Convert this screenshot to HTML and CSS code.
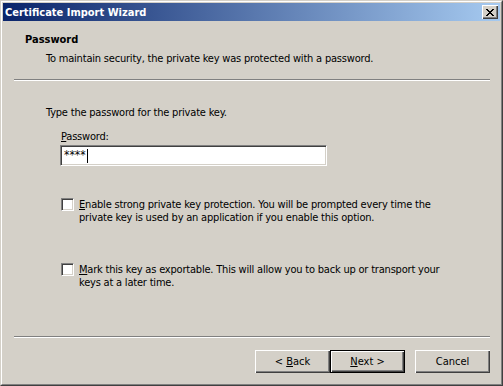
FILE: index.html
```html
<!DOCTYPE html>
<html lang="en">
<head>
  <meta charset="UTF-8">
  <title>Certificate Import Wizard</title>
  <link rel="stylesheet" href="styles.css">
</head>
<body>
  <div class="window">
    <div class="frame">
      <div class="titlebar">
        <span class="title">Certificate Import Wizard</span>
        <button class="close-btn" aria-label="Close">
          <svg width="8" height="7" viewBox="0 0 8 7" shape-rendering="crispEdges">
            <path d="M0 0h2v1h-2zM6 0h2v1h-2zM1 1h2v1h-2zM5 1h2v1h-2zM2 2h4v1h-4zM3 3h2v1h-2zM2 4h4v1h-4zM1 5h2v1h-2zM5 5h2v1h-2zM0 6h2v1h-2zM6 6h2v1h-2z" fill="#000"/>
          </svg>
        </button>
      </div>

      <div class="header">
        <h1>Password</h1>
        <p class="subtitle">To maintain security, the private key was protected with a password.</p>
      </div>

      <div class="separator"></div>

      <div class="content">
        <p class="intro">Type the password for the private key.</p>
        <label class="field-label" for="pwd"><u>P</u>assword:</label>
        <div class="edit" id="pwd">****<span class="caret"></span></div>

        <div class="check-row first">
          <span class="checkbox"></span>
          <span class="check-text"><u>E</u>nable strong private key protection. You will be prompted every time the<br>private key is used by an application if you enable this option.</span>
        </div>

        <div class="check-row second">
          <span class="checkbox"></span>
          <span class="check-text"><u>M</u>ark this key as exportable. This will allow you to back up or transport your<br>keys at a later time.</span>
        </div>
      </div>

      <div class="separator bottom"></div>

      <div class="buttons">
        <button class="btn">&lt; <u>B</u>ack</button>
        <button class="btn default"><u>N</u>ext &gt;</button>
        <button class="btn cancel">Cancel</button>
      </div>
    </div>
  </div>
</body>
</html>
```

FILE: styles.css
```css
body {
  margin: 0;
  background: #d4d0c8;
  font-family: "DejaVu Sans Condensed", "DejaVu Sans", sans-serif;
  font-size: 11px;
  line-height: 13px;
  letter-spacing: -0.2px;
  color: #000;
}

.window {
  width: 503px;
  height: 386px;
  box-sizing: border-box;
  border: 1px solid;
  border-color: #d4d0c8 #404040 #404040 #d4d0c8;
  background: #d4d0c8;
}

.frame {
  height: 100%;
  box-sizing: border-box;
  border: 1px solid;
  border-color: #fff #808080 #808080 #fff;
  padding: 1px;
  display: flex;
  flex-direction: column;
}

.titlebar {
  height: 18px;
  flex: 0 0 18px;
  display: flex;
  align-items: center;
  justify-content: space-between;
  padding: 0 2px;
  background: linear-gradient(to right, #0a246a, #a6caf0);
}

.title {
  color: #fff;
  font-weight: bold;
  letter-spacing: 0;
}

.close-btn {
  width: 16px;
  height: 14px;
  padding: 0;
  border: none;
  background: #d4d0c8;
  box-shadow: inset 1px 1px #fff, inset -1px -1px #404040, inset -2px -2px #808080;
  display: flex;
  align-items: center;
  justify-content: center;
}

.header {
  padding-top: 12px;
}

.header h1 {
  margin: 0;
  padding-left: 22px;
  font-size: 11px;
  font-weight: bold;
  letter-spacing: 0;
}

.subtitle {
  margin: 6px 0 0;
  padding-left: 43px;
}

.separator {
  height: 0;
  margin: 14px 10px 0 11px;
  border-top: 1px solid #808080;
  border-bottom: 1px solid #fff;
}

.separator.bottom {
  margin-top: 47px;
}

.content {
  display: flex;
  flex-direction: column;
  align-items: flex-start;
}

.intro {
  margin: 25px 0 0;
  padding-left: 43px;
}

.field-label {
  margin: 11px 0 0 58px;
}

.edit {
  margin: 2px 0 0 57px;
  width: 267px;
  height: 21px;
  box-sizing: border-box;
  background: #fff;
  border: 1px solid;
  border-color: #808080 #fff #fff #808080;
  box-shadow: inset 1px 1px #404040, inset -1px -1px #d4d0c8;
  padding: 3px 0 0 3px;
  font-size: 12px;
  letter-spacing: 0;
  display: flex;
  align-items: flex-start;
}

.caret {
  width: 1px;
  height: 14px;
  margin-left: 1px;
  background: #000;
}

.check-row {
  display: flex;
  align-items: flex-start;
  margin-left: 58px;
}

.check-row.first {
  margin-top: 32px;
}

.check-row.second {
  margin-top: 39px;
}

.checkbox {
  width: 13px;
  height: 13px;
  flex: 0 0 13px;
  box-sizing: border-box;
  background: #fff;
  border: 1px solid;
  border-color: #808080 #fff #fff #808080;
  box-shadow: inset 1px 1px #404040, inset -1px -1px #d4d0c8;
  margin-right: 5px;
}

.buttons {
  display: flex;
  justify-content: flex-end;
  margin: 12px 10px 0 0;
}

.btn {
  width: 75px;
  height: 23px;
  padding: 0;
  border: none;
  background: #d4d0c8;
  font: inherit;
  color: #000;
  box-shadow: inset 1px 1px #fff, inset -1px -1px #404040, inset -2px -2px #808080;
}

.btn.default {
  border: 1px solid #000;
}

.btn.cancel {
  margin-left: 10px;
}
```
